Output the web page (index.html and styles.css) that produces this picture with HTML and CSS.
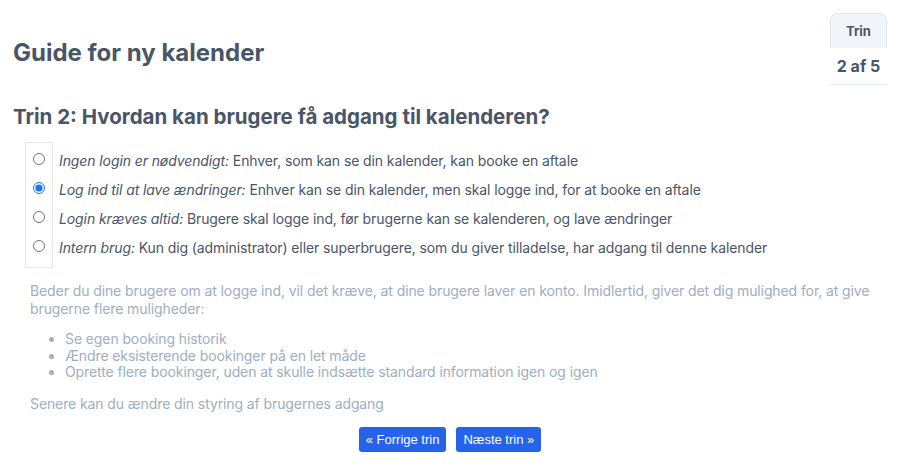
FILE: index.html
```html
<!DOCTYPE html>
<html lang="da">
<head>
<meta charset="utf-8">
<link rel="stylesheet" href="styles.css">
</head>
<body>
<div class="page">
  <header class="top">
    <h1 class="title">Guide for ny kalender</h1>
    <div class="step">
      <div class="step-label">Trin</div>
      <div class="step-count">2 af 5</div>
    </div>
  </header>
  <h2 class="subtitle">Trin 2: Hvordan kan brugere få adgang til kalenderen?</h2>
  <div class="options">
    <div class="radios">
      <input type="radio" name="a" class="radio">
      <input type="radio" name="a" class="radio" checked>
      <input type="radio" name="a" class="radio">
      <input type="radio" name="a" class="radio">
    </div>
    <div class="labels">
      <div class="label"><em>Ingen login er nødvendigt:</em> Enhver, som kan se din kalender, kan booke en aftale</div>
      <div class="label"><em>Log ind til at lave ændringer:</em> Enhver kan se din kalender, men skal logge ind, for at booke en aftale</div>
      <div class="label"><em>Login kræves altid:</em> Brugere skal logge ind, før brugerne kan se kalenderen, og lave ændringer</div>
      <div class="label"><em>Intern brug:</em> Kun dig (administrator) eller superbrugere, som du giver tilladelse, har adgang til denne kalender</div>
    </div>
  </div>
  <div class="info">
    <p class="para">Beder du dine brugere om at logge ind, vil det kræve, at dine brugere laver en konto. Imidlertid, giver det dig mulighed for, at give brugerne flere muligheder:</p>
    <ul class="list">
      <li>Se egen booking historik</li>
      <li>Ændre eksisterende bookinger på en let måde</li>
      <li>Oprette flere bookinger, uden at skulle indsætte standard information igen og igen</li>
    </ul>
    <p class="para later">Senere kan du ændre din styring af brugernes adgang</p>
  </div>
  <div class="nav">
    <button class="btn">« Forrige trin</button>
    <button class="btn">Næste trin »</button>
  </div>
</div>
</body>
</html>
```
FILE: styles.css
```css
* { box-sizing: border-box; }
html, body { margin: 0; padding: 0; background: #fff; }
body {
  font-family: Inter, "Liberation Sans", Arial, sans-serif;
  font-size: 14px;
  color: #4a5568;
}
.page { padding: 13px 13px 0 13px; }
.top {
  display: flex;
  justify-content: space-between;
  align-items: flex-start;
}
.title {
  margin: 26px 0 0 0;
  font-size: 24px;
  font-weight: 700;
  line-height: 28px;
  color: #4a5568;
}
.step {
  width: 57px;
  text-align: center;
  border-bottom: 1px solid #e2e8f0;
}
.step-label {
  height: 35px;
  line-height: 34px;
  background: #f1f5f9;
  border: 1px solid #e2e8f0;
  border-bottom: 0;
  border-radius: 7px 7px 0 0;
  font-weight: 700;
  font-size: 13px;
  color: #4a5568;
}
.step-count {
  height: 36px;
  line-height: 36px;
  font-weight: 700;
  font-size: 16px;
  color: #4a5568;
}
.subtitle {
  margin: 20px 0 0 0;
  font-size: 20.5px;
  font-weight: 700;
  line-height: 24px;
  color: #4a5568;
}
.options {
  display: flex;
  margin: 13px 0 0 12px;
}
.radios {
  width: 28px;
  border: 1px solid #e5e7eb;
  display: flex;
  flex-direction: column;
  align-items: center;
  padding: 10px 0 3px 0;
}
.radio {
  width: 12px;
  height: 12px;
  margin: 0 0 17px 0;
  accent-color: #1a73e8;
}
.radio:last-child { margin-bottom: 11px; }
.labels {
  padding: 10px 0 0 6px;
  color: #4a5568;
  letter-spacing: -0.1px;
}
.label {
  height: 29px;
  line-height: 17px;
  white-space: nowrap;
}
.info {
  padding: 14px 0 0 17px;
  color: #a0aec0;
  line-height: 18px;
  letter-spacing: -0.1px;
}
.para { margin: 0; }
.list {
  margin: 13px 0 14px 0;
  padding-left: 35px;
  line-height: 16.5px;
}
.nav {
  display: flex;
  justify-content: center;
  gap: 10px;
  margin-top: 14px;
}
.btn {
  font-family: "Liberation Sans", Arial, sans-serif;
  font-size: 13px;
  color: #fff;
  background: #2563eb;
  border: 0;
  border-radius: 3px;
  height: 25px;
  padding: 0 7px;
}
```
